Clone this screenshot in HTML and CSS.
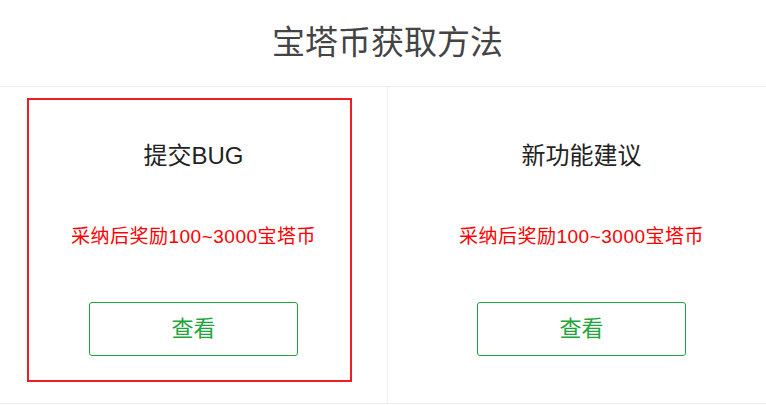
FILE: index.html
```html
<!DOCTYPE html>
<html>
	<head>
		<meta charset="UTF-8">
		<title>宝塔币获取方法</title>
		<link rel="stylesheet" href="styles.css">
	</head>
	<body>
		<section class="wrap">
			<h2 class="title">宝塔币获取方法</h2>
			<ul class="ways">
				<li class="on">
					<h3>提交BUG</h3>
					<p>采纳后奖励100~3000宝塔币</p>
					<a href="javascript:;" class="btn">查看</a>
				</li>
				<li>
					<h3>新功能建议</h3>
					<p>采纳后奖励100~3000宝塔币</p>
					<a href="javascript:;" class="btn">查看</a>
				</li>
			</ul>
		</section>
	</body>
</html>
```

FILE: styles.css
```css
body{
	margin: 0;
	background: #fff;
	overflow: hidden;
	font-family: "Liberation Sans", "Noto Sans CJK SC", sans-serif;
}
.wrap{
	width: 775px;
}
.title{
	margin: 0;
	height: 86px;
	line-height: 86px;
	text-align: center;
	font-size: 33px;
	font-weight: normal;
	color: #444;
	border-bottom: 1px solid #eee;
}
.ways{
	margin: 0;
	padding: 0;
	list-style: none;
	display: grid;
	grid-template-columns: 388px 387px;
	border-bottom: 1px solid #eee;
}
.ways li{
	position: relative;
	padding: 54px 0 47px;
	text-align: center;
}
.ways li:first-child{
	border-right: 1px solid #eee;
}
.ways li.on::after{
	content: "";
	position: absolute;
	top: 11px;
	left: 27px;
	width: 321px;
	height: 280px;
	border: 2px solid #ee1c25;
}
.ways h3{
	margin: 0;
	font-size: 24px;
	line-height: 30px;
	font-weight: normal;
	color: #222;
}
.ways p{
	margin: 54px 0 53px;
	font-size: 19px;
	line-height: 24px;
	letter-spacing: 0.5px;
	color: #ff0000;
}
.btn{
	display: block;
	box-sizing: border-box;
	width: 209px;
	height: 54px;
	line-height: 52px;
	margin: 0 auto;
	border: 1px solid #20a53a;
	border-radius: 3px;
	color: #20a53a;
	font-size: 22px;
	text-decoration: none;
}
```
